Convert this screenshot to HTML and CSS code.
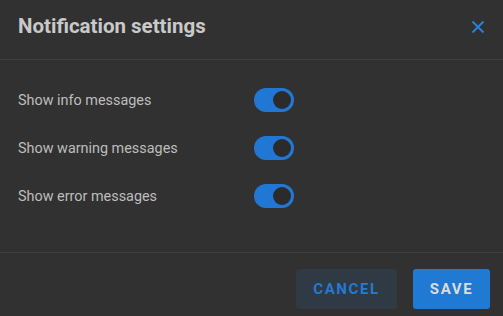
FILE: index.html
```html
<!DOCTYPE html>
<html>
<head>
<meta charset="utf-8">
<link rel="stylesheet" href="styles.css">
</head>
<body>
<div class="dialog">
  <header class="header">
    <h1 class="title">Notification settings</h1>
    <button class="close" aria-label="Close">
      <svg width="14" height="14" viewBox="0 0 14 14"><path d="M1.5 1.5 L12.5 12.5 M12.5 1.5 L1.5 12.5" stroke="#2a7fd6" stroke-width="2" fill="none"/></svg>
    </button>
  </header>
  <div class="body">
    <div class="row"><span class="label">Show info messages</span><span class="switch"><span class="knob"></span></span></div>
    <div class="row"><span class="label">Show warning messages</span><span class="switch"><span class="knob"></span></span></div>
    <div class="row"><span class="label">Show error messages</span><span class="switch"><span class="knob"></span></span></div>
  </div>
  <footer class="footer">
    <button class="btn cancel">CANCEL</button>
    <button class="btn save">SAVE</button>
  </footer>
</div>
</body>
</html>
```
FILE: styles.css
```css
html, body {
  margin: 0;
  padding: 0;
  background: #313131;
  font-family: Roboto, "Liberation Sans", sans-serif;
}
.dialog {
  width: 503px;
  height: 316px;
  display: flex;
  flex-direction: column;
}
.header {
  height: 60px;
  box-sizing: border-box;
  border-bottom: 1px solid #3d3d3d;
  display: flex;
  align-items: center;
  justify-content: space-between;
  padding: 0 18px 0 18px;
}
.title {
  margin: 0;
  font-size: 20.5px;
  font-weight: 700;
  color: #c9c9c9;
  position: relative;
  top: -4px;
}
.close {
  background: none;
  border: 0;
  padding: 0;
  width: 14px;
  height: 14px;
  position: relative;
  top: -3px;
  cursor: pointer;
}
.close svg { display: block; }
.body {
  padding: 16px 18px 0 18px;
  height: 193px;
  box-sizing: border-box;
  border-bottom: 1px solid #3d3d3d;
}
.row {
  height: 48px;
  display: flex;
  align-items: center;
}
.label {
  width: 236px;
  font-size: 14.4px;
  color: #bdbdbd;
}
.switch {
  width: 40px;
  height: 24px;
  border-radius: 12px;
  background: #2178d4;
  display: flex;
  align-items: center;
  justify-content: flex-end;
  padding-right: 3px;
  box-sizing: border-box;
}
.knob {
  width: 18px;
  height: 18px;
  border-radius: 50%;
  background: #2b2b2b;
}
.footer {
  flex: 1;
  display: flex;
  justify-content: flex-end;
  align-items: flex-start;
  gap: 16px;
  padding: 16px 13px 0 0;
}
.btn {
  height: 40px;
  border: 0;
  border-radius: 3px;
  font-family: Roboto, "Liberation Sans", sans-serif;
  font-size: 15px;
  font-weight: 700;
  letter-spacing: 1.6px;
  cursor: pointer;
}
.cancel {
  width: 101px;
  background: #2f3a45;
  color: #2479d0;
}
.save {
  width: 77px;
  background: #2079d3;
  color: #dcdcdc;
}
```
